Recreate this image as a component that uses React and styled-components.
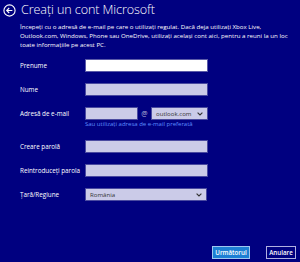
import React from "react";
import styled, { createGlobalStyle } from "styled-components";

const Global = createGlobalStyle`
  html, body { margin: 0; padding: 0; background: #000080; }
  body { font-family: "Open Sans", "Noto Sans", sans-serif; color: #fff; }
  * { box-sizing: border-box; }
`;

const Page = styled.div`
  width: 300px;
  height: 262px;
  background: #000080;
  display: flex;
  flex-direction: column;
  overflow: hidden;
`;

const Header = styled.div`
  display: flex;
  align-items: center;
  gap: 5px;
  padding: 2px 0 0 3px;
  height: 18px;
`;

const Title = styled.h1`
  margin: 0;
  font-size: 12.6px;
  font-weight: 300;
  letter-spacing: -0.1px;
  line-height: 16px;
  color: #fff;
`;

const Desc = styled.p`
  margin: 4px 0 0 20px;
  font-size: 6.15px;
  line-height: 9px;
  color: #fff;
`;

const Form = styled.div`
  margin-top: 10px;
  display: grid;
  grid-template-columns: 65px 124px;
  padding-left: 20px;
  row-gap: 11px;
  align-items: center;
`;

const Label = styled.div`
  font-size: 6.3px;
  color: #fff;
  line-height: 13px;
  margin-top: ${(p) => (p.$gap ? 9 : 0)}px;
`;

const Field = styled.div`
  height: 13px;
  border: 1px solid ${(p) => (p.$active ? "#5a5aa8" : "#4a4aa0")};
  background: ${(p) => (p.$active ? "#ffffff" : "#cbcbe8")};
  width: ${(p) => p.$w || 123}px;
  margin-top: ${(p) => (p.$gap ? 9 : 0)}px;
  display: flex;
  align-items: center;
  justify-content: space-between;
  padding: 0 4px 0 4px;
  font-size: 6.1px;
  color: #333;
`;

const EmailRow = styled.div`
  display: flex;
  align-items: center;
`;

const At = styled.span`
  width: 13px;
  text-align: center;
  font-size: 7px;
  color: #b8b8d8;
`;

const Link = styled.div`
  font-size: 6px;
  color: #5d8fff;
  margin-top: 1px;
  line-height: 7px;
`;

const EmailCell = styled.div`
  display: flex;
  flex-direction: column;
  margin-bottom: -8px;
`;

const Footer = styled.div`
  margin-top: auto;
  display: flex;
  justify-content: flex-end;
  gap: 16px;
  padding: 0 4px 3px 0;
`;

const Button = styled.button`
  height: 13px;
  padding: 0;
  width: ${(p) => p.$w}px;
  border: 1px solid ${(p) => (p.$primary ? "#9fc8f0" : "#b0b0e0")};
  background: ${(p) => (p.$primary ? "#1d7fd4" : "#000080")};
  color: #fff;
  font-family: "Open Sans", "Noto Sans", sans-serif;
  font-size: 6.2px;
  font-weight: 600;
  line-height: 11px;
`;

const Chevron = () => (
  <svg width="6" height="4" viewBox="0 0 6 4">
    <path d="M0.6 0.6 L3 3 L5.4 0.6" fill="none" stroke="#333" strokeWidth="1.1" />
  </svg>
);

const BackIcon = () => (
  <svg width="13" height="13" viewBox="0 0 13 13">
    <circle cx="6.5" cy="6.5" r="5.6" fill="none" stroke="#fff" strokeWidth="1.1" />
    <path d="M9.4 6.5 H3.8 M6.2 4 L3.7 6.5 L6.2 9" fill="none" stroke="#fff" strokeWidth="1.1" />
  </svg>
);

export default function App() {
  return (
    <>
      <Global />
      <Page>
        <Header>
          <BackIcon />
          <Title>Creați un cont Microsoft</Title>
        </Header>
        <Desc>
          Începeți cu o adresă de e-mail pe care o utilizați regulat. Dacă deja utilizați Xbox Live,
          <br />
          Outlook.com, Windows, Phone sau OneDrive, utilizați același cont aici, pentru a reuni la un loc
          <br />
          toate informațiile pe acest PC.
        </Desc>
        <Form>
          <Label>Prenume</Label>
          <Field $active />
          <Label>Nume</Label>
          <Field />
          <Label>Adresă de e-mail</Label>
          <EmailCell>
            <EmailRow>
              <Field $w={53} />
              <At>@</At>
              <Field $w={57}>
                <span>outlook.com</span>
                <Chevron />
              </Field>
            </EmailRow>
            <Link>Sau utilizați adresa de e-mail preferată</Link>
          </EmailCell>
          <Label $gap>Creare parolă</Label>
          <Field $gap />
          <Label>Reintroduceți parola</Label>
          <Field />
          <Label>Țară/Regiune</Label>
          <Field $w={122}>
            <span>România</span>
            <Chevron />
          </Field>
        </Form>
        <Footer>
          <Button $primary $w={38}>Următorul</Button>
          <Button $w={30}>Anulare</Button>
        </Footer>
      </Page>
    </>
  );
}
